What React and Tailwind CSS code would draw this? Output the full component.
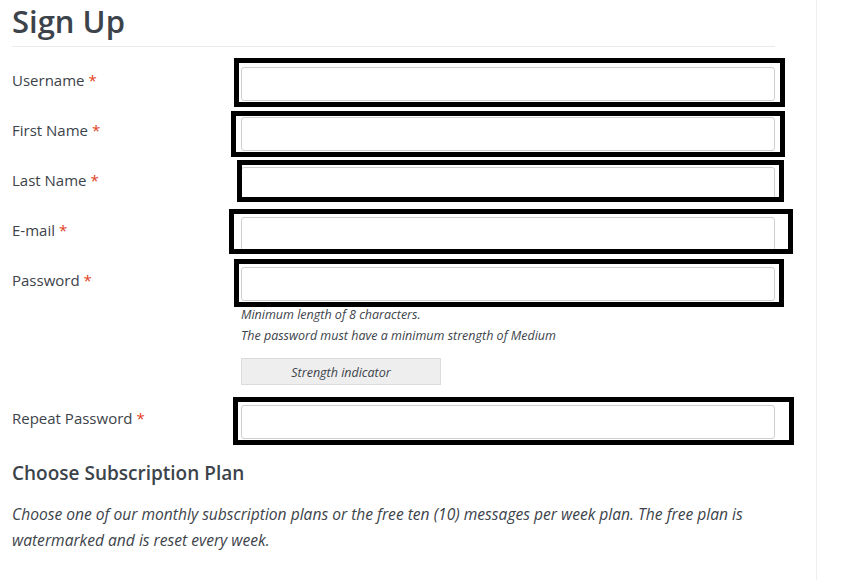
import React from "react";

const font = { fontFamily: '"Open Sans", "Noto Sans", sans-serif' };

function Row({ label }) {
  return (
    <div className="flex items-start">
      <div className="w-[229px] shrink-0 text-[15px] leading-[26px] text-[#3c434a]">
        {label} <span className="text-[#e2401c]">*</span>
      </div>
      <div className="h-[34px] w-[534px] rounded-[3px] border border-[#cfcfcf] bg-white" />
    </div>
  );
}

const boxes = [
  "left-[234px] top-[58px] w-[551px] h-[49px]",
  "left-[231px] top-[111px] w-[554px] h-[46px]",
  "left-[237px] top-[160px] w-[547px] h-[42px]",
  "left-[229px] top-[209px] w-[564px] h-[45px]",
  "left-[234px] top-[259px] w-[550px] h-[48px]",
  "left-[233px] top-[397px] w-[561px] h-[48px]",
];

export default function App() {
  return (
    <div className="relative flex h-[580px] w-[854px] overflow-hidden bg-white" style={font}>
      <div className="w-[817px] shrink-0 border-r border-[#efefef] pl-3 pr-[41px]">
        <h1 className="text-[31px] leading-[42px] font-semibold text-[#3c434a]">Sign Up</h1>
        <div className="mt-[4px] h-px bg-[#eaeaea]" />
        <div className="mt-[20px] flex flex-col gap-4">
          <Row label="Username" />
          <Row label="First Name" />
          <Row label="Last Name" />
          <Row label="E-mail" />
          <div className="flex items-start">
            <div className="w-[229px] shrink-0 text-[15px] leading-[26px] text-[#3c434a]">
              Password <span className="text-[#e2401c]">*</span>
            </div>
            <div className="flex flex-col">
              <div className="h-[34px] w-[534px] rounded-[3px] border border-[#cfcfcf] bg-white" />
              <div className="mt-[3px] text-[12.5px] italic leading-[21px] text-[#3c434a]">
                <div>Minimum length of 8 characters.</div>
                <div>The password must have a minimum strength of Medium</div>
              </div>
              <div className="mt-[12px] flex h-[27px] w-[200px] items-center justify-center border border-[#dcdcdc] bg-[#eeeeee] pt-[3px] text-[12.5px] italic text-[#3c434a]">
                Strength indicator
              </div>
            </div>
          </div>
          <div className="mt-[3px] pt-px">
            <Row label="Repeat Password" />
          </div>
        </div>
        <h2 className="mt-[20px] text-[19px] leading-[28px] font-semibold text-[#3c434a]">
          Choose Subscription Plan
        </h2>
        <p className="mt-[14px] text-[15.6px] italic leading-[26px] text-[#3c434a]">
          Choose one of our monthly subscription plans or the free ten (10) messages per week plan. The free plan is watermarked and is reset every week.
        </p>
      </div>
      {boxes.map((b, i) => (
        <div key={i} className={`pointer-events-none absolute border-[5px] border-black ${b}`} />
      ))}
    </div>
  );
}
